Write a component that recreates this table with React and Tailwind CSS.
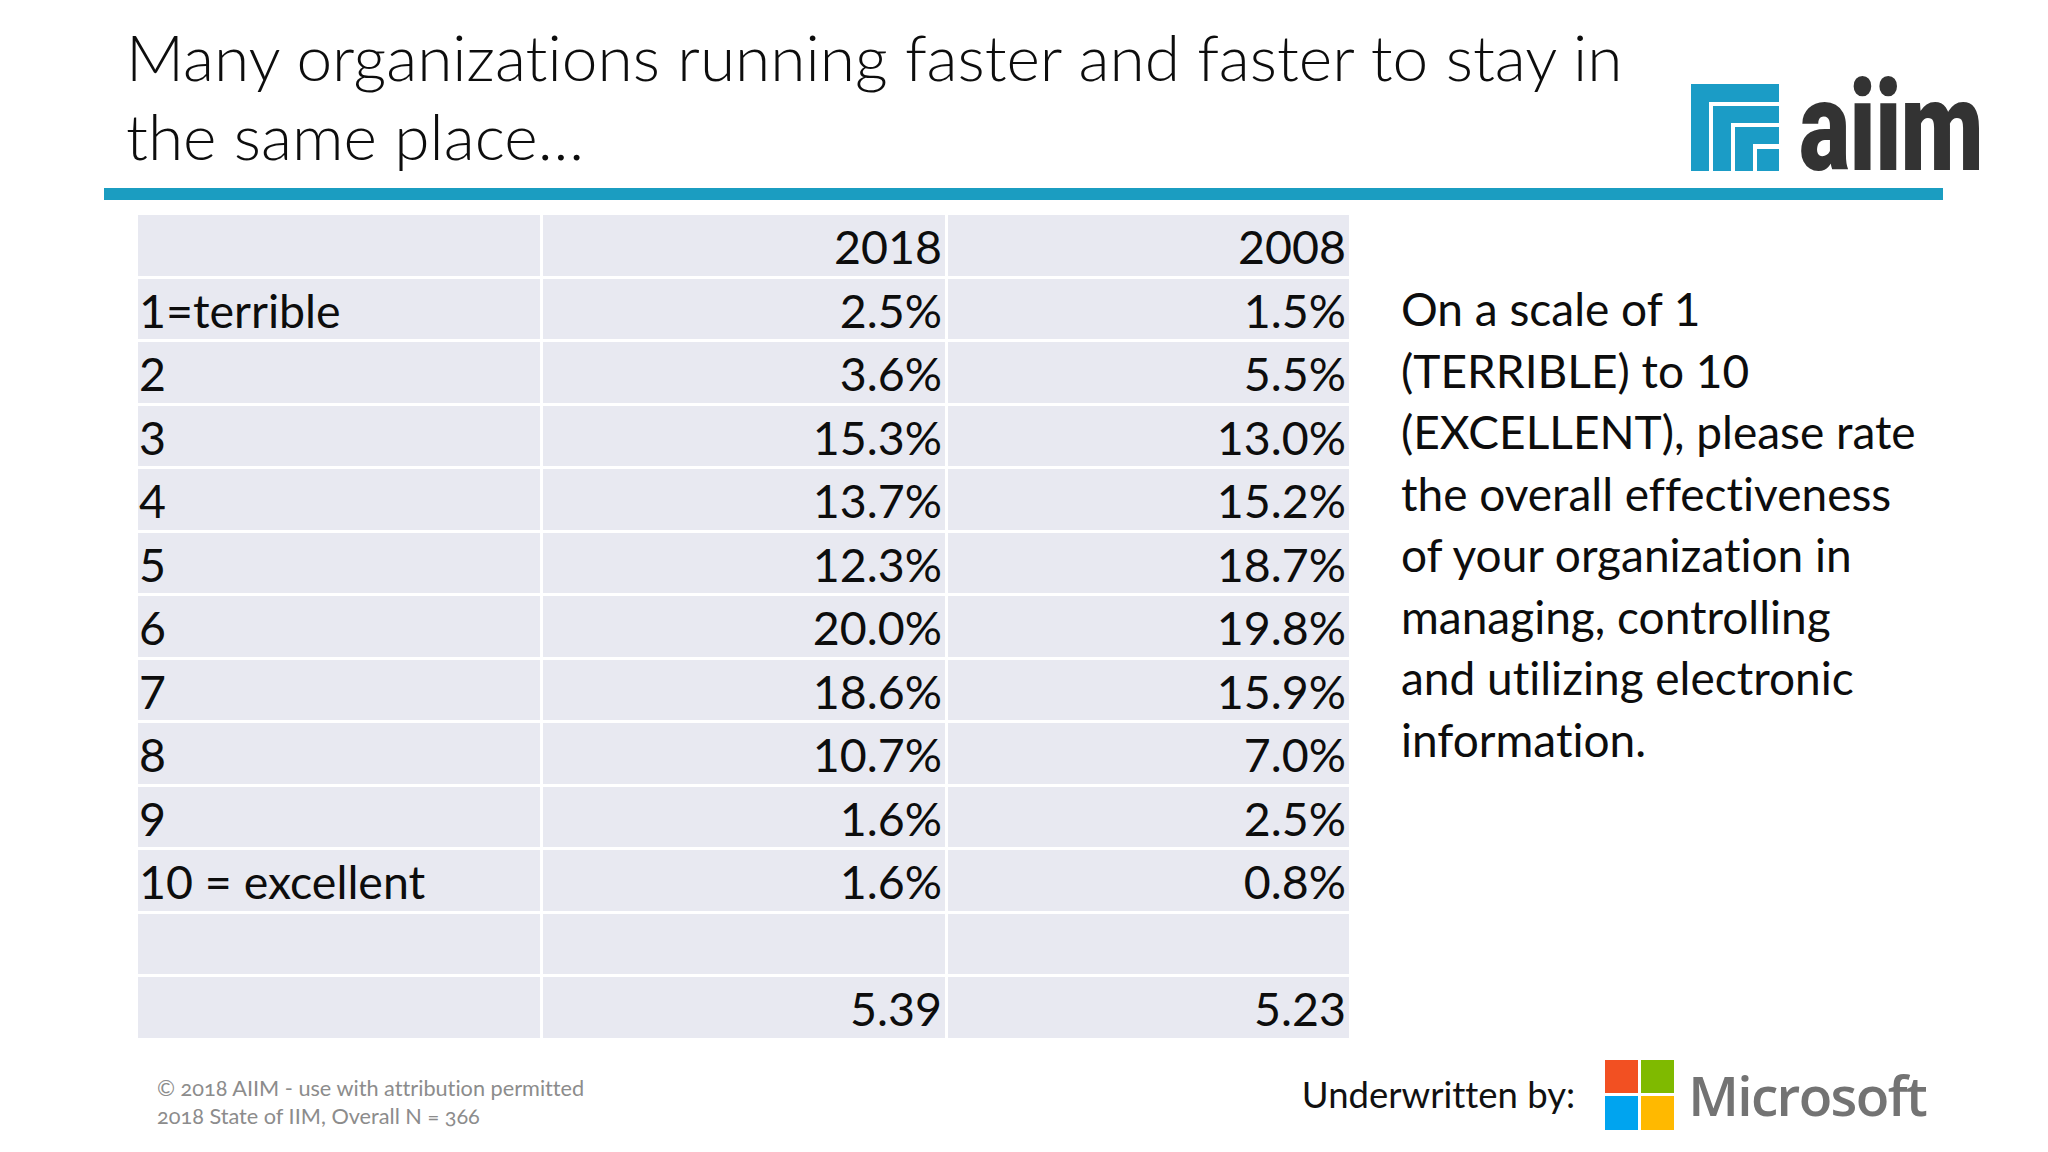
const rows = [
  ["", "2018", "2008"],
  ["1=terrible", "2.5%", "1.5%"],
  ["2", "3.6%", "5.5%"],
  ["3", "15.3%", "13.0%"],
  ["4", "13.7%", "15.2%"],
  ["5", "12.3%", "18.7%"],
  ["6", "20.0%", "19.8%"],
  ["7", "18.6%", "15.9%"],
  ["8", "10.7%", "7.0%"],
  ["9", "1.6%", "2.5%"],
  ["10 = excellent", "1.6%", "0.8%"],
  ["", "", ""],
  ["", "5.39", "5.23"],
];

const AiimMark = () => (
  <svg width="88" height="87" viewBox="0 0 88 87">
    <g fill="#1b9cc6">
      <rect x="0" y="0" width="88" height="18" />
      <rect x="0" y="0" width="18" height="87" />
      <rect x="22" y="22" width="66" height="17" />
      <rect x="22" y="22" width="18" height="65" />
      <rect x="44" y="43" width="44" height="17" />
      <rect x="44" y="43" width="18" height="44" />
      <rect x="66" y="65" width="22" height="22" />
    </g>
  </svg>
);

const MsMark = () => (
  <svg width="69" height="70" viewBox="0 0 69 70">
    <rect x="0" y="0" width="33" height="33" fill="#f25022" />
    <rect x="36" y="0" width="33" height="33" fill="#7fba00" />
    <rect x="0" y="36" width="33" height="34" fill="#00a4ef" />
    <rect x="36" y="36" width="33" height="34" fill="#ffb900" />
  </svg>
);

export default function App() {
  return (
    <div className="w-[2048px] h-[1152px] bg-white flex flex-col overflow-hidden font-['Lato','Noto_Sans',sans-serif] text-[#0d0d0d] [font-variant-ligatures:none]">
      {/* header */}
      <header className="h-[188px] flex items-start">
        <h1 className="pl-[126px] pt-[17px] text-[64px] leading-[79px] font-light whitespace-nowrap">
          Many organizations running faster and faster to stay in
          <br />
          the same place…
        </h1>
        <div className="ml-auto mr-[66px] mt-[84px] flex items-start gap-[20px]">
          <AiimMark />
          <div className="w-[183px] -mt-[21px]">
            <div className="origin-left scale-x-[0.76] font-['Roboto',sans-serif] font-black text-[127px] leading-none text-[#333333] tracking-[-0.01em]">
              aiim
            </div>
          </div>
        </div>
      </header>

      <div className="ml-[104px] w-[1839px] h-[12px] bg-[#1b9dc1]" />

      {/* body */}
      <main className="flex items-start mt-[15px]">
        <div className="ml-[138px] w-[1211px] grid grid-cols-[402px_402px_401px] auto-rows-[60.5px] gap-[3px] text-[46.5px] leading-none">
          {rows.map((r, i) => (
            <div key={i} className="contents">
              <div className="bg-[#e8e9f1] flex items-end pl-[1px] pb-[6px] whitespace-nowrap">{r[0]}</div>
              <div className="bg-[#e8e9f1] flex items-end justify-end pr-[3px] pb-[6px]">{r[1]}</div>
              <div className="bg-[#e8e9f1] flex items-end justify-end pr-[3px] pb-[6px]">{r[2]}</div>
            </div>
          ))}
        </div>
        <p className="ml-[52px] mt-[63px] text-[46px] leading-[61.5px] whitespace-nowrap">
          On a scale of 1<br />
          (TERRIBLE) to 10<br />
          (EXCELLENT), please rate<br />
          the overall effectiveness<br />
          of your organization in<br />
          managing, controlling<br />
          and utilizing electronic<br />
          information.
        </p>
      </main>

      {/* footer */}
      <footer className="flex items-start">
        <div className="ml-[157px] mt-[36px] text-[21.7px] leading-[28px] text-[#8c8c8c] [font-variant-numeric:oldstyle-nums]">
          <div>© 2018 AIIM - use with attribution permitted</div>
          <div>2018 State of IIM, Overall N = 366</div>
        </div>
        <div className="ml-auto mr-[122px] mt-[22px] flex items-center">
          <span className="text-[36.5px] leading-none text-[#111111]">Underwritten by:</span>
          <div className="ml-[30px]">
            <MsMark />
          </div>
          <span className="ml-[14px] font-['Open_Sans',sans-serif] font-semibold text-[55px] leading-none text-[#737373] tracking-[-0.03em]">
            Microsoft
          </span>
        </div>
      </footer>
    </div>
  );
}
